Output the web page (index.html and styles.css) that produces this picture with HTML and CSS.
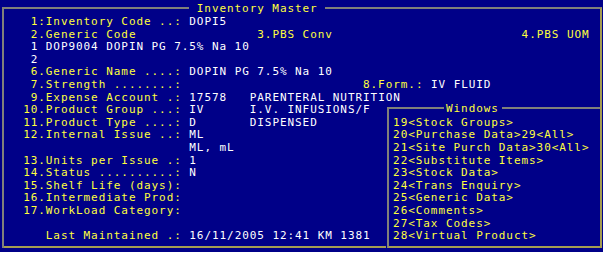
FILE: index.html
```html
<!DOCTYPE html>
<html lang="en">
<head>
    <meta charset="UTF-8">
    <title>Inventory Master</title>
    <link rel="stylesheet" href="styles.css">
</head>
<body>
    <div class="screen">
        <div class="frame">
            <div class="title"> Inventory Master </div>
            <div class="rows">
                <div class="row">   1:Inventory Code ..: <span class="val">DOPI5</span></div>
                <div class="row">   2.Generic Code                3.PBS Conv                         4.PBS UOM</div>
                <div class="row val">   1 DOP9004 DOPIN PG 7.5% Na 10</div>
                <div class="row val">   2</div>
                <div class="row">   6.Generic Name ....: <span class="val">DOPIN PG 7.5% Na 10</span></div>
                <div class="row">   7.Strength ........:                        8.Form.: <span class="val">IV FLUID</span></div>
                <div class="row">   9.Expense Account .: <span class="val">17578   PARENTERAL NUTRITION</span></div>
            </div>
            <div class="lower">
                <div class="rows left">
                    <div class="row">  10.Product Group ...: <span class="val">IV      I.V. INFUSIONS/F</span></div>
                    <div class="row">  11.Product Type ....: <span class="val">D       DISPENSED</span></div>
                    <div class="row">  12.Internal Issue ..: <span class="val">ML</span></div>
                    <div class="row val">                        ML, mL</div>
                    <div class="row">  13.Units per Issue .: <span class="val">1</span></div>
                    <div class="row">  14.Status ..........: <span class="val">N</span></div>
                    <div class="row">  15.Shelf Life (days):</div>
                    <div class="row">  16.Intermediate Prod:</div>
                    <div class="row">  17.WorkLoad Category:</div>
                    <div class="row"></div>
                    <div class="row">     Last Maintained .: <span class="val">16/11/2005 12:41 KM 1381</span></div>
                </div>
                <div class="windows">
                    <div class="win-title">Windows</div>
                    <div class="row">19&lt;Stock Groups&gt;</div>
                    <div class="row">20&lt;Purchase Data&gt;29&lt;All&gt;</div>
                    <div class="row">21&lt;Site Purch Data&gt;30&lt;All&gt;</div>
                    <div class="row">22&lt;Substitute Items&gt;</div>
                    <div class="row">23&lt;Stock Data&gt;</div>
                    <div class="row">24&lt;Trans Enquiry&gt;</div>
                    <div class="row">25&lt;Generic Data&gt;</div>
                    <div class="row">26&lt;Comments&gt;</div>
                    <div class="row">27&lt;Tax Codes&gt;</div>
                    <div class="row">28&lt;Virtual Product&gt;</div>
                </div>
            </div>
        </div>
    </div>
</body>
</html>
```

FILE: styles.css
```css
* {
    margin: 0;
    padding: 0;
    box-sizing: border-box;
}

body {
    background-color: #ffffff;
}

.screen {
    width: 603px;
    height: 252px;
    padding: 6.5px 0 0 2px;
    background-color: #000088;
    font-family: "DejaVu Sans Mono", monospace;
    font-size: 11px;
    line-height: 12.62px;
    letter-spacing: 0.93px;
    color: #ffff3c;
}

.frame {
    width: 599.7px;
    border-top: 2px solid #80807a;
    border-left: 2px solid #80807a;
    border-right: 2px solid #a49c52;
}

.title {
    width: max-content;
    margin: -5.7px 0 0.5px 185.25px;
    background-color: #000088;
    white-space: pre;
}

.rows {
    padding-left: 4.05px;
}

.row {
    height: 12.62px;
    white-space: pre;
}

.val {
    color: #ffffff;
}

.lower {
    display: flex;
}

.left {
    width: 381.6px;
    padding-bottom: 2.6px;
    border-bottom: 2px solid #a49c52;
}

.windows {
    flex: 1;
    margin: 3.26px 0 0 1.6px;
    padding-left: 3.9px;
    border-top: 2px solid #80807a;
    border-left: 2px solid #80807a;
    border-bottom: 2px solid #a49c52;
}

.win-title {
    width: max-content;
    margin: -6.23px 0 0.97px 51.4px;
    padding: 0 3px 0 1.5px;
    background-color: #000088;
}
```
